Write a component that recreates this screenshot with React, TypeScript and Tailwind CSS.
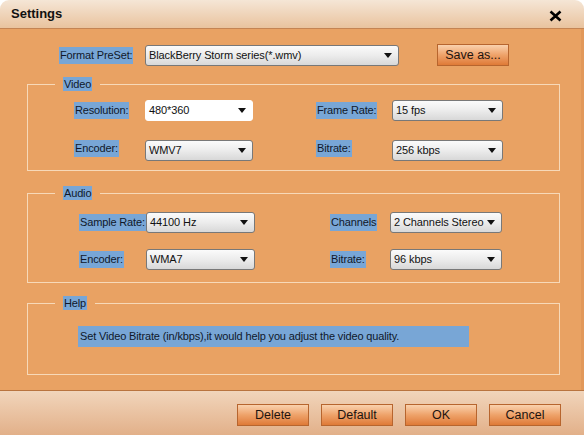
import React from 'react';

const font = { fontFamily: '"Liberation Sans", Arial, sans-serif' };

function Label({ text, className = '' }: { text: string; className?: string }) {
  return (
    <div className={`shrink-0 flex whitespace-nowrap ${className}`}>
      <span className="block bg-[#78a6d6] px-[1px] text-[11px] tracking-[-0.15px] leading-[17px] text-[#10182a]">{text}</span>
    </div>
  );
}

function Select({ value, width, plain = false }: { value: string; width: string; plain?: boolean }) {
  return (
    <div
      className={`${width} h-[21px] shrink-0 flex items-center justify-between pl-[3px] pr-[6px] rounded-[3px] border whitespace-nowrap ${
        plain ? 'bg-white border-white' : 'bg-gradient-to-b from-[#fbfbfb] via-[#ececec] to-[#d8d8d8] border-[#787878]'
      }`}
    >
      <span className="text-[11px] tracking-[-0.1px] text-[#111] leading-none">{value}</span>
      <svg width="8" height="5" viewBox="0 0 8 5" className="shrink-0">
        <path d="M0 0h8L4 5z" fill="#111" />
      </svg>
    </div>
  );
}

function Btn({ text, w = 'w-[72px]' }: { text: string; w?: string }) {
  return (
    <div className={`${w} h-[22px] flex items-center justify-center border border-[#b7652e] bg-gradient-to-b from-[#f9d1ad] via-[#eea269] to-[#df7a36] text-[12.5px] text-[#1d1410]`}>
      {text}
    </div>
  );
}

function Group({ title, children }: { title: string; children: React.ReactNode }) {
  return (
    <fieldset className="ml-[27px] mr-[21px] border border-[#f7d9b8]">
      <legend className="ml-[27px] px-[8px] text-[11px] leading-[14px]">
        <span className="block bg-[#78a6d6] px-[1px] tracking-[-0.15px] text-[#10182a]">{title}</span>
      </legend>
      {children}
    </fieldset>
  );
}

export default function App() {
  return (
    <div className="w-[584px] h-[435px] flex flex-col overflow-hidden bg-white" style={font}>
      <div className="h-[29px] shrink-0 rounded-t-[9px] border-b border-[#c48453] bg-gradient-to-b from-[#f5e6d6] to-[#e9c39e] flex items-center justify-between pl-[11px] pr-[22px]">
        <span className="text-[13px] font-bold text-[#111]">Settings</span>
        <svg width="13" height="12" viewBox="0 0 13 12" className="mt-[3px]">
          <path d="M1.5 1.5l10 9M11.5 1.5l-10 9" stroke="#000" strokeWidth="2.6" />
        </svg>
      </div>

      <div className="flex-1 bg-[#e9a263] border-r-[3px] border-r-[#e2985a] flex flex-col pt-[15px]">
        <div className="flex items-center h-[22px]">
          <Label text="Format PreSet:" className="ml-[59px] w-[86px]" />
          <Select value="BlackBerry Storm series(*.wmv)" width="w-[254px]" />
          <div className="ml-[38px]">
            <Btn text="Save as..." w="w-[72px]" />
          </div>
        </div>

        <div className="mt-[11px]">
          <Group title="Video">
            <div className="pt-[9px] pb-[9px] pl-[46px] flex flex-col gap-[19px]">
              <div className="flex items-center">
                <Label text="Resolution:" className="w-[71px]" />
                <Select value="480*360" width="w-[108px]" plain />
                <Label text="Frame Rate:" className="ml-[63px] w-[76px]" />
                <Select value="15 fps" width="w-[111px]" />
              </div>
              <div className="flex items-start">
                <Label text="Encoder:" className="w-[71px]" />
                <Select value="WMV7" width="w-[108px]" />
                <Label text="Bitrate:" className="ml-[63px] w-[76px]" />
                <Select value="256 kbps" width="w-[111px]" />
              </div>
            </div>
          </Group>
        </div>

        <div className="mt-[15px]">
          <Group title="Audio">
            <div className="pt-[12px] pb-[12px] pl-[51px] flex flex-col gap-[16px]">
              <div className="flex items-center">
                <Label text="Sample Rate:" className="w-[67px]" />
                <Select value="44100 Hz" width="w-[109px]" />
                <Label text="Channels" className="ml-[75px] w-[60px]" />
                <Select value="2 Channels Stereo" width="w-[112px]" />
              </div>
              <div className="flex items-center">
                <Label text="Encoder:" className="w-[67px]" />
                <Select value="WMA7" width="w-[109px]" />
                <Label text="Bitrate:" className="ml-[75px] w-[60px]" />
                <Select value="96 kbps" width="w-[112px]" />
              </div>
            </div>
          </Group>
        </div>

        <div className="mt-[13px]">
          <Group title="Help">
            <div className="pt-[16px] pb-[27px] pl-[50px]">
              <div className="w-[391px] h-[21px] bg-[#78a6d6] flex items-center pl-[2px] text-[11px] tracking-[-0.15px] text-[#10182a] whitespace-nowrap">
                Set Video Bitrate (in/kbps),it would help you adjust the video quality.
              </div>
            </div>
          </Group>
        </div>
      </div>

      <div className="h-[45px] shrink-0 border-t border-[#b9743f] bg-gradient-to-b from-[#f1d5bb] to-[#e2b089] flex items-start pt-[13px] pl-[237px] gap-[12px]">
        <Btn text="Delete" />
        <Btn text="Default" />
        <Btn text="OK" />
        <Btn text="Cancel" />
      </div>
    </div>
  );
}
